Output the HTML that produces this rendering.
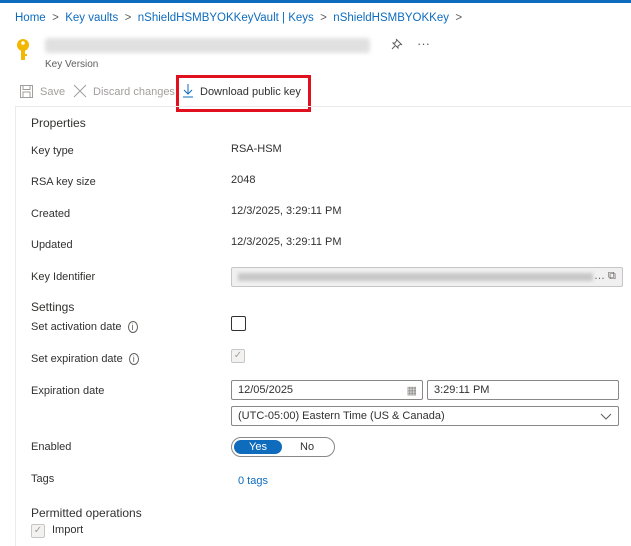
<!DOCTYPE html>
<html><head><style>
*{margin:0;padding:0;box-sizing:border-box}
body{width:631px;height:546px;overflow:hidden;background:#fff;font-family:"Liberation Sans",sans-serif;font-size:11px;color:#323130;position:relative}
.a{position:absolute;white-space:nowrap}
.l{color:#0f6cbd}
.box{position:absolute;border:1px solid #8a8886;border-radius:2px;background:#fff}
</style></head><body>
<div class="a" style="left:0;top:0;width:631px;height:3px;background:#0f6cbd"></div>
<div class="a" style="left:15px;top:12px;font-size:11.5px"><span class="l">Home</span> <span style="color:#605e5c">&nbsp;&gt;&nbsp;</span> <span class="l">Key vaults</span> <span style="color:#605e5c">&nbsp;&gt;&nbsp;</span> <span class="l">nShieldHSMBYOKKeyVault | Keys</span> <span style="color:#605e5c">&nbsp;&gt;&nbsp;</span> <span class="l">nShieldHSMBYOKKey</span> <span style="color:#605e5c">&nbsp;&gt;</span></div>
<svg class="a" style="left:15px;top:37px" width="16" height="26" viewBox="0 0 16 26"><circle cx="8" cy="8" r="6" fill="#f2b800"/><circle cx="8" cy="6" r="1.8" fill="#fff"/><rect x="6" y="12" width="4" height="11" fill="#f2b800"/><rect x="9" y="17" width="3" height="2" fill="#f2b800"/></svg>
<div class="a" style="left:45px;top:38px;width:325px;height:15px;background:#e0e0e0;filter:blur(2px);border-radius:3px"></div>
<svg class="a" style="left:391px;top:38px" width="12" height="12" viewBox="0 0 12 12"><path d="M5 1L11 7M6 2L4 5L2 5L7 10L7 8L10 6M4 8L1 11" stroke="#605e5c" fill="none"/></svg>
<div class="a" style="left:417px;top:36px;font-size:13px;color:#605e5c">···</div>
<div class="a" style="left:45px;top:59px;font-size:10px;color:#605e5c">Key Version</div>
<svg class="a" style="left:20px;top:85px" width="13" height="13"><rect x="0.5" y="0.5" width="12" height="12" fill="none" stroke="#a19f9d"/><rect x="3" y="0.5" width="7" height="4" fill="none" stroke="#a19f9d"/><rect x="3" y="7" width="7" height="5.5" fill="none" stroke="#a19f9d"/></svg>
<div class="a" style="left:40px;top:86px;color:#a19f9d">Save</div>
<svg class="a" style="left:73px;top:84px" width="14" height="14"><path d="M1 1L13 13M13 1L1 13" stroke="#a19f9d"/></svg>
<div class="a" style="left:93px;top:86px;color:#a19f9d">Discard changes</div>
<svg class="a" style="left:182px;top:83px" width="12" height="15"><path d="M6 1V11M2 7L6 11L10 7M1 14H11" stroke="#0f6cbd" fill="none"/></svg>
<div class="a" style="left:200px;top:86px;color:#323130">Download public key</div>
<div class="a" style="left:176px;top:75px;width:135px;height:37px;border:3px solid #e0101e"></div>
<div class="a" style="left:15px;top:106px;width:616px;height:1px;background:#edebe9"></div>
<div class="a" style="left:15px;top:107px;width:1px;height:439px;background:#edebe9"></div>
<div class="a" style="left:31px;top:116px;font-size:12px">Properties</div>
<div class="a" style="left:31px;top:145px">Key type</div><div class="a" style="left:231px;top:143px">RSA-HSM</div>
<div class="a" style="left:31px;top:176px">RSA key size</div><div class="a" style="left:231px;top:174px">2048</div>
<div class="a" style="left:31px;top:208px">Created</div><div class="a" style="left:231px;top:205px">12/3/2025, 3:29:11 PM</div>
<div class="a" style="left:31px;top:239px">Updated</div><div class="a" style="left:231px;top:236px">12/3/2025, 3:29:11 PM</div>
<div class="a" style="left:31px;top:271px">Key Identifier</div>
<div class="box" style="left:231px;top:267px;width:392px;height:20px;background:#f0f0f0;border-color:#c8c6c4"><div style="position:absolute;left:6px;top:5px;width:355px;height:8px;background:#c8c8c8;filter:blur(1.5px)"></div><div style="position:absolute;left:362px;top:2px;color:#605e5c">… ⧉</div></div>
<div class="a" style="left:31px;top:300px;font-size:12px">Settings</div>
<div class="a" style="left:31px;top:321px">Set activation date <span style="font-size:9px;color:#605e5c;border:1px solid #605e5c;border-radius:50%;padding:0 3px;margin-left:3px">i</span></div>
<div class="box" style="left:231px;top:316px;width:15px;height:15px;border-color:#323130"></div>
<div class="a" style="left:31px;top:353px">Set expiration date <span style="font-size:9px;color:#605e5c;border:1px solid #605e5c;border-radius:50%;padding:0 3px;margin-left:3px">i</span></div>
<div class="box" style="left:231px;top:349px;width:14px;height:14px;border-color:#c8c6c4;background:#f3f2f1;color:#a19f9d;font-size:10px;text-align:center;line-height:12px">✓</div>
<div class="a" style="left:31px;top:385px">Expiration date</div>
<div class="box" style="left:231px;top:380px;width:192px;height:20px"><span style="position:absolute;left:6px;top:3px">12/05/2025</span><span style="position:absolute;right:5px;top:3px;color:#8a8886">▦</span></div>
<div class="box" style="left:427px;top:380px;width:192px;height:20px"><span style="position:absolute;left:6px;top:3px">3:29:11 PM</span></div>
<div class="box" style="left:231px;top:406px;width:388px;height:20px"><span style="position:absolute;left:6px;top:3px">(UTC-05:00) Eastern Time (US &amp; Canada)</span><svg style="position:absolute;right:6px;top:6px" width="12" height="7"><path d="M1 1L6 6L11 1" stroke="#605e5c" fill="none"/></svg></div>
<div class="a" style="left:31px;top:441px">Enabled</div>
<div class="a" style="left:231px;top:437px;width:104px;height:20px;border:1px solid #8a8886;border-radius:10px"><div style="position:absolute;left:2px;top:2px;width:48px;height:14px;background:#0f6cbd;border-radius:8px;color:#fff;text-align:center;line-height:14px">Yes</div><div style="position:absolute;left:68px;top:2px;line-height:14px">No</div></div>
<div class="a" style="left:31px;top:473px">Tags</div><div class="a l" style="left:238px;top:475px">0 tags</div>
<div class="a" style="left:31px;top:506px;font-size:12px">Permitted operations</div>
<div class="box" style="left:31px;top:524px;width:14px;height:14px;border-color:#c8c6c4;background:#f3f2f1;color:#a19f9d;font-size:10px;text-align:center;line-height:12px">✓</div>
<div class="a" style="left:52px;top:524px">Import</div>
</body></html>
